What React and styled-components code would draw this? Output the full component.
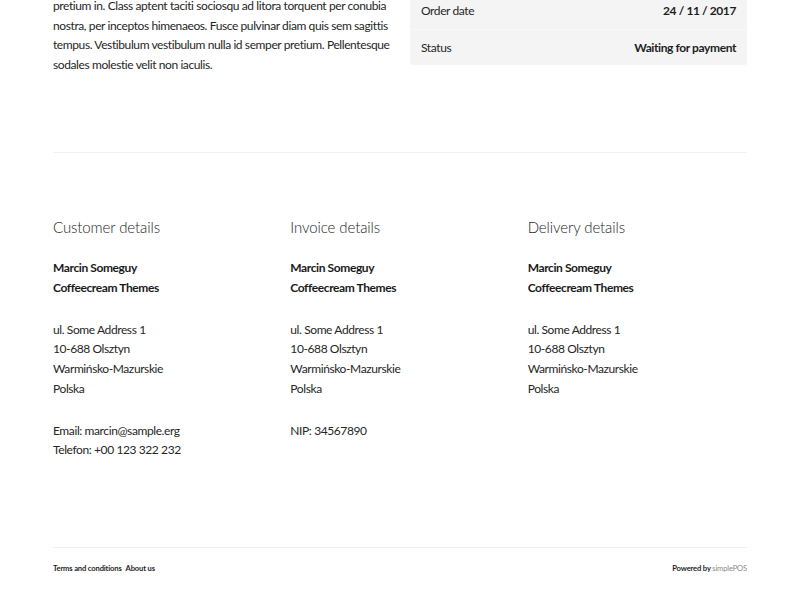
import React from "react";
import styled, { createGlobalStyle } from "styled-components";

const Global = createGlobalStyle`
  html, body { margin: 0; padding: 0; background: #fff; }
  body {
    font-family: Lato, "Open Sans", "Liberation Sans", sans-serif;
    color: #2a2a2a;
    font-size: 12px;
    letter-spacing: -0.4px;
    -webkit-font-smoothing: antialiased;
  }
  * { box-sizing: border-box; }
`;

const Page = styled.div`
  width: 694px;
  margin: 0 auto;
  overflow: hidden;
`;

const TopSection = styled.section`
  display: grid;
  grid-template-columns: 1fr 1fr;
  column-gap: 20px;
  align-items: start;
  margin-top: -8px;
`;

const Intro = styled.p`
  margin: 0;
  padding-top: 4px;
  font-size: 12px;
  line-height: 19.7px;
  color: #262626;
`;

const SummaryTable = styled.div`
  background: #f4f4f4;
  border-radius: 0 0 3px 3px;
`;

const SummaryRow = styled.div`
  display: flex;
  justify-content: space-between;
  align-items: center;
  height: 36.5px;
  padding: 0 11px;
  font-size: 12px;
  border-top: ${(p) => (p.$first ? "none" : "1px solid #f9f9f9")};
`;

const Label = styled.span`
  color: #262626;
`;

const Value = styled.span`
  font-weight: 700;
  color: #1e1e1e;
`;

const Divider = styled.hr`
  border: 0;
  border-top: 1px solid #f1f1f1;
  margin: 77px 0 0;
`;

const Details = styled.section`
  display: grid;
  grid-template-columns: repeat(3, 1fr);
  column-gap: 18px;
  padding-top: 65px;
  min-height: 394px;
`;

const Column = styled.div``;

const Heading = styled.h3`
  margin: 0 0 22px;
  font-size: 15px;
  line-height: 18px;
  font-weight: 300;
  letter-spacing: -0.1px;
  color: #1e1e1e;
`;

const Block = styled.p`
  margin: 0 0 22.3px;
  font-size: 12px;
  line-height: 19.7px;
  font-weight: ${(p) => (p.$bold ? 700 : 400)};
  color: ${(p) => (p.$bold ? "#1a1a1a" : "#262626")};
`;

const FooterBar = styled.footer`
  display: flex;
  justify-content: space-between;
  align-items: center;
  border-top: 1px solid #f1f1f1;
  padding-top: 15px;
  font-size: 7.6px;
  line-height: 10px;
  letter-spacing: -0.15px;
`;

const FooterLinks = styled.nav`
  display: flex;
  gap: 4px;
`;

const FooterLink = styled.a`
  color: #1e1e1e;
  font-weight: 700;
  text-decoration: none;
`;

const Powered = styled.span`
  color: #1e1e1e;
  font-weight: 700;
`;

const Brand = styled.span`
  color: #8a8a8a;
  font-weight: 400;
`;

const columns = [
  {
    title: "Customer details",
    blocks: [
      { bold: true, lines: ["Marcin Someguy", "Coffeecream Themes"] },
      { lines: ["ul. Some Address 1", "10-688 Olsztyn", "Warmińsko-Mazurskie", "Polska"] },
      { lines: ["Email: marcin@sample.erg", "Telefon: +00 123 322 232"] },
    ],
  },
  {
    title: "Invoice details",
    blocks: [
      { bold: true, lines: ["Marcin Someguy", "Coffeecream Themes"] },
      { lines: ["ul. Some Address 1", "10-688 Olsztyn", "Warmińsko-Mazurskie", "Polska"] },
      { lines: ["NIP: 34567890"] },
    ],
  },
  {
    title: "Delivery details",
    blocks: [
      { bold: true, lines: ["Marcin Someguy", "Coffeecream Themes"] },
      { lines: ["ul. Some Address 1", "10-688 Olsztyn", "Warmińsko-Mazurskie", "Polska"] },
    ],
  },
];

export default function App() {
  return (
    <>
      <Global />
      <Page>
        <TopSection>
          <Intro>
            pretium in. Class aptent taciti sociosqu ad litora torquent per conubia
            nostra, per inceptos himenaeos. Fusce pulvinar diam quis sem sagittis
            tempus. Vestibulum vestibulum nulla id semper pretium. Pellentesque
            sodales molestie velit non iaculis.
          </Intro>
          <SummaryTable>
            <SummaryRow $first>
              <Label>Order date</Label>
              <Value>24 / 11 / 2017</Value>
            </SummaryRow>
            <SummaryRow>
              <Label>Status</Label>
              <Value>Waiting for payment</Value>
            </SummaryRow>
          </SummaryTable>
        </TopSection>
        <Divider />
        <Details>
          {columns.map((c) => (
            <Column key={c.title}>
              <Heading>{c.title}</Heading>
              {c.blocks.map((b, i) => (
                <Block key={i} $bold={b.bold}>
                  {b.lines.map((l, j) => (
                    <React.Fragment key={j}>
                      {l}
                      {j < b.lines.length - 1 && <br />}
                    </React.Fragment>
                  ))}
                </Block>
              ))}
            </Column>
          ))}
        </Details>
        <FooterBar>
          <FooterLinks>
            <FooterLink href="#">Terms and conditions</FooterLink>
            <FooterLink href="#">About us</FooterLink>
          </FooterLinks>
          <Powered>
            Powered by <Brand>simplePOS</Brand>
          </Powered>
        </FooterBar>
      </Page>
    </>
  );
}
